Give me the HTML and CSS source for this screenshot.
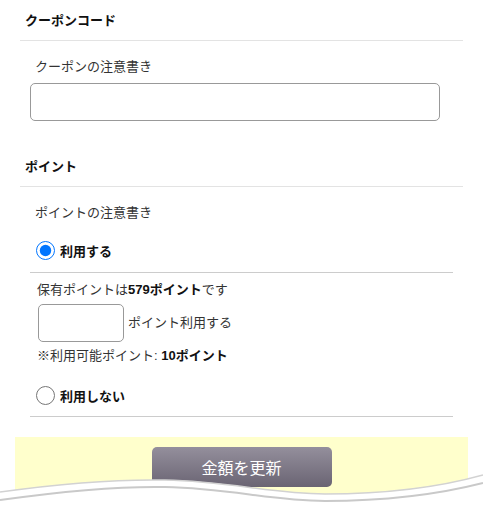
FILE: index.html
```html
<!DOCTYPE html>
<html lang="ja">
  <head>
    <meta charset="UTF-8" />
    <meta name="viewport" content="width=device-width, initial-scale=1.0" />
    <title>お支払い - クーポン・ポイント</title>
    <link rel="stylesheet" href="styles.css">
  </head>
  <body>
    <section class="block block--first">
      <h2 class="block__title">クーポンコード</h2>
      <div class="block__body">
        <p class="block__note">クーポンの注意書き</p>
        <input type="text" class="coupon-input" />
      </div>
    </section>

    <section class="block">
      <h2 class="block__title">ポイント</h2>
      <div class="block__body block__body--flush">
        <p class="block__note">ポイントの注意書き</p>
        <div class="point-options">
          <label class="option">
            <input type="radio" name="usePoint" checked />
            <span>利用する</span>
          </label>
          <div class="point-detail">
            <p>保有ポイントは<b>579ポイント</b>です</p>
            <div class="point-use">
              <input type="text" class="point-input" />
              <span>ポイント利用する</span>
            </div>
            <p>※利用可能ポイント: <b>10ポイント</b></p>
          </div>
          <label class="option option--last">
            <input type="radio" name="usePoint" />
            <span>利用しない</span>
          </label>
        </div>
      </div>
    </section>

    <div class="footer">
      <div class="update-box">
        <button class="update-btn">金額を更新</button>
      </div>
      <!-- decorative wave over the bottom of the box -->
      <svg class="wave" width="483" height="47" viewBox="0 0 483 47">
        <path d="M0,20 C50,13 110,7 165,8 C230,9 270,22 325,22 C390,22 440,15 483,3 L483,47 L0,47 Z" fill="#fff" />
        <path d="M0,20 C50,13 110,7 165,8 C230,9 270,22 325,22 C390,22 440,15 483,3" fill="none" stroke="#d2d2d2" stroke-width="1.5" />
        <path d="M0,28 C50,21 110,14 165,15 C230,16 270,29 325,29 C390,29 440,22 483,11" fill="none" stroke="#c9c9c9" stroke-width="2" />
      </svg>
    </div>
  </body>
</html>
```

FILE: styles.css
```css
body {
  margin: 0;
  padding: 0;
  font-family: "Liberation Sans", "Noto Sans CJK JP", sans-serif;
  font-size: 13px;
  color: #333;
  background: #fff;
  overflow: hidden;
}
p {
  margin: 0;
}
.block {
  margin: 0 20px;
}
.block--first {
  padding-top: 1px;
}
.block__title {
  margin: 0;
  padding-left: 5px;
  line-height: 39px;
  font-size: 13px;
  font-weight: bold;
  color: #111;
  border-bottom: 1px solid #e3e3e3;
}
.block__body {
  padding: 16px 10px 26px;
}
.block__body--flush {
  padding-bottom: 0;
}
.block__note {
  padding-left: 5px;
  line-height: 20px;
  color: #333;
}
.coupon-input {
  display: block;
  box-sizing: border-box;
  width: 410px;
  height: 38px;
  margin-top: 6px;
  border: 1px solid #999;
  border-radius: 5px;
}
.point-options {
  margin-top: 15px;
}
.option {
  display: flex;
  align-items: center;
  height: 24px;
  padding: 0 0 10px 6px;
  border-bottom: 1px solid #ccc;
  font-weight: bold;
  color: #111;
}
.option--last {
  margin-top: 17px;
  padding-bottom: 9px;
}
.option input {
  width: 19px;
  height: 19px;
  margin: 0 5px 0 0;
}
.point-detail {
  padding: 7px 0 0 7px;
  line-height: 20px;
}
.point-detail b {
  color: #111;
}
.point-use {
  display: flex;
  align-items: center;
  gap: 4px;
  margin: 4px 0;
}
.point-input {
  box-sizing: border-box;
  width: 86px;
  height: 38px;
  margin-left: 1px;
  border: 1px solid #999;
  border-radius: 5px;
}
.footer {
  position: relative;
  margin-top: 20px;
}
.update-box {
  margin: 0 15px;
  padding: 10px 0 30px;
  background: #ffffcc;
  text-align: center;
}
.update-btn {
  width: 180px;
  height: 40px;
  border: none;
  border-radius: 5px;
  background: linear-gradient(#948f9c, #6a6473);
  color: #fff;
  font-family: "Noto Sans CJK JP", sans-serif;
  font-size: 16px;
  cursor: pointer;
}
.wave {
  position: absolute;
  left: 0;
  top: 35px;
  display: block;
}
```
